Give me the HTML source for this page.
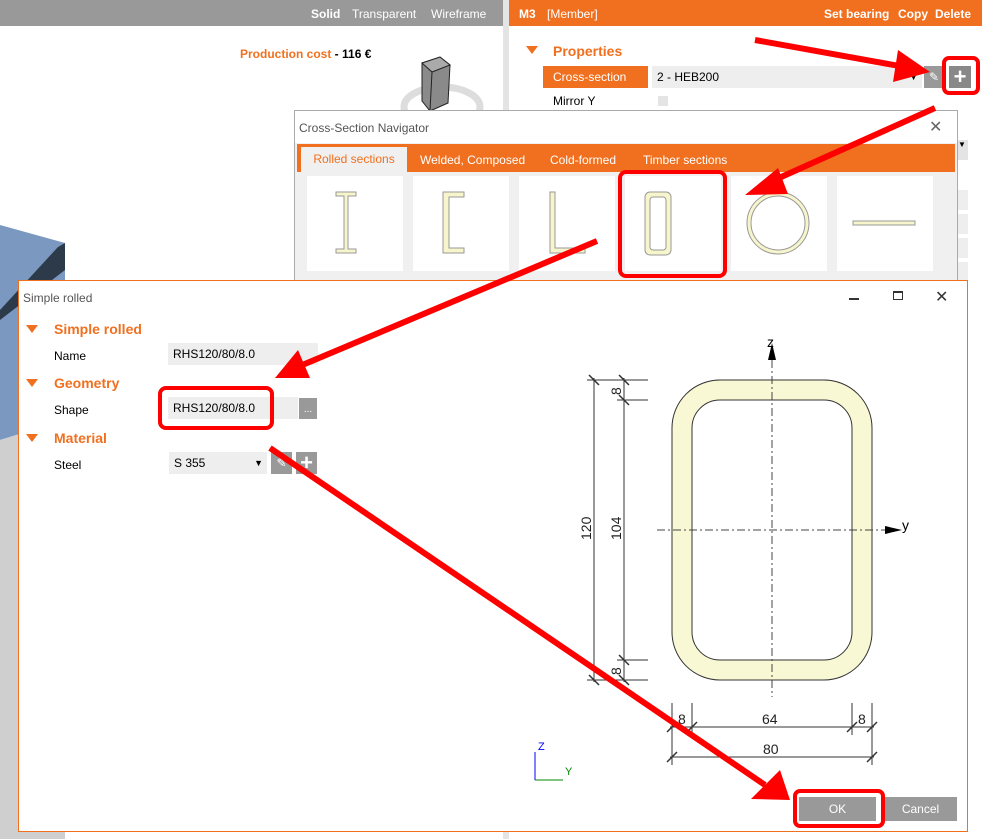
<!DOCTYPE html>
<html><head><meta charset="utf-8"><style>
*{margin:0;padding:0;box-sizing:border-box}
body{width:982px;height:839px;position:relative;overflow:hidden;background:#fff;font-family:"Liberation Sans",sans-serif;font-size:12px;color:#000}
.a{position:absolute}
.hd{color:#f07020;font-weight:bold;font-size:14px}
.tri{width:0;height:0;border-left:6px solid transparent;border-right:6px solid transparent;border-top:8px solid #f07020;position:absolute}
.fld{background:#eee;position:absolute;height:22px;line-height:22px;padding-left:5px;font-size:12px}
.tile{position:absolute;top:176px;width:96px;height:95px;background:#fff}
</style></head><body>
<div class="a" style="left:0;top:0;width:503px;height:26px;background:#999;color:#fff;font-size:12px">
<span class="a" style="left:311px;top:7px;font-weight:bold">Solid</span>
<span class="a" style="left:352px;top:7px">Transparent</span>
<span class="a" style="left:431px;top:7px">Wireframe</span></div>
<div class="a" style="left:503px;top:0;width:6px;height:839px;background:#e4e4e4"></div>
<div class="a" style="left:509px;top:0;width:473px;height:26px;background:#f07020;color:#fff">
<span class="a" style="left:10px;top:7px;font-weight:bold">M3</span>
<span class="a" style="left:38px;top:7px">[Member]</span>
<span class="a" style="left:315px;top:7px;font-weight:bold">Set bearing</span>
<span class="a" style="left:389px;top:7px;font-weight:bold">Copy</span>
<span class="a" style="left:426px;top:7px;font-weight:bold">Delete</span></div>
<div class="a" style="left:240px;top:47px;color:#f07020;font-weight:bold">Production cost <span style="color:#000">- 116 €</span></div>
<svg class="a" style="left:400px;top:55px" width="90" height="60"><ellipse cx="42" cy="52" rx="38" ry="20" fill="none" stroke="#ddd" stroke-width="7"/><polygon points="22,8 40,2 50,10 48,48 30,56 22,46" fill="#8a8a8a" stroke="#222"/><polygon points="22,8 40,2 50,10 32,17" fill="#aaa" stroke="#222"/><line x1="32" y1="17" x2="30" y2="56" stroke="#222"/></svg>
<svg class="a" style="left:0;top:225px" width="70" height="614"><polygon points="0,0 65,18 65,195 0,215" fill="#7a98c0"/><polygon points="0,215 65,195 65,614 0,614" fill="#cfcfcf"/><polygon points="58,22 65,18 65,45 0,95 0,85" fill="#2c3a4a"/></svg>
<div class="tri" style="left:526px;top:46px"></div>
<div class="a hd" style="left:553px;top:43px">Properties</div>
<div class="a" style="left:543px;top:66px;width:105px;height:22px;background:#f07020;color:#fff;line-height:22px;padding-left:10px">Cross-section</div>
<div class="fld" style="left:652px;top:66px;width:270px">2 - HEB200<span class="a" style="right:4px;top:0;font-size:9px">▼</span></div>
<div class="a" style="left:924px;top:66px;width:20px;height:22px;background:#999;color:#fff;text-align:center;line-height:22px">✎</div>
<div class="a" style="left:949px;top:66px;width:22px;height:22px;background:#888;color:#fff;font-size:22px;line-height:22px;text-align:center;font-weight:bold">+</div>
<div class="a" style="left:553px;top:94px">Mirror Y</div>
<div class="a" style="left:658px;top:96px;width:10px;height:10px;background:#e4e4e4"></div>
<div class="a" style="left:958px;top:140px;width:10px;height:20px;background:#e4e4e4;font-size:8px">▼</div>
<div class="a" style="left:958px;top:190px;width:10px;height:300px;background:repeating-linear-gradient(#eee 0 20px,#fff 20px 24px)"></div>
<div class="a" style="left:294px;top:110px;width:664px;height:180px;background:#f0f0f0;border:1px solid #aaa">
<div class="a" style="left:0;top:0;width:662px;height:32px;background:#fff"></div>
<span class="a" style="left:4px;top:10px;color:#555">Cross-Section Navigator</span>
<span class="a" style="left:634px;top:6px;font-size:16px;color:#666">✕</span>
<div class="a" style="left:2px;top:33px;width:658px;height:28px;background:#f07020"></div>
<div class="a" style="left:6px;top:36px;width:106px;height:25px;background:#f0f0f0;color:#f07020;line-height:25px;text-align:center">Rolled sections</div>
<span class="a" style="left:125px;top:42px;color:#fff">Welded, Composed</span>
<span class="a" style="left:255px;top:42px;color:#fff">Cold-formed</span>
<span class="a" style="left:348px;top:42px;color:#fff">Timber sections</span>
</div>
<div class="tile" style="left:307px"></div><div class="tile" style="left:413px"></div><div class="tile" style="left:519px"></div><div class="tile" style="left:625px"></div><div class="tile" style="left:731px"></div><div class="tile" style="left:837px"></div>
<svg class="a" style="left:0;top:0" width="982" height="280"><g fill="#f7f5cc" stroke="#999">
<path d="M336,192h20v4h-8v53h8v4h-20v-4h8v-53h-8z"/>
<path d="M443,192h21v5h-15v51h15v5h-21z"/>
<path d="M550,192h5v56h30v5h-35z"/>
<rect x="645" y="192" width="26" height="63" rx="5"/><rect x="650" y="197" width="16" height="53" rx="3" fill="#fff"/>
<circle cx="778" cy="223" r="31"/><circle cx="778" cy="223" r="27" fill="#fff"/>
<rect x="853" y="221" width="62" height="4"/></g></svg>
<div class="a" style="left:18px;top:280px;width:950px;height:552px;background:#fff;border:1px solid #f07020">
<span class="a" style="left:4px;top:10px;color:#555">Simple rolled</span>
<div class="a" style="left:830px;top:17px;width:10px;height:2px;background:#333"></div>
<div class="a" style="left:874px;top:10px;width:10px;height:9px;border:1px solid #333;border-top-width:2px"></div>
<span class="a" style="left:916px;top:6px;font-size:16px;color:#333">✕</span>
</div>
<div class="tri" style="left:26px;top:325px"></div><div class="a hd" style="left:54px;top:321px">Simple rolled</div>
<div class="a" style="left:54px;top:349px">Name</div><div class="fld" style="left:168px;top:343px;width:150px">RHS120/80/8.0</div>
<div class="tri" style="left:26px;top:379px"></div><div class="a hd" style="left:54px;top:375px">Geometry</div>
<div class="a" style="left:54px;top:403px">Shape</div><div class="fld" style="left:168px;top:397px;width:130px">RHS120/80/8.0</div>
<div class="a" style="left:299px;top:398px;width:18px;height:21px;background:#999;color:#fff;text-align:center;font-size:10px;line-height:24px">...</div>
<div class="tri" style="left:26px;top:434px"></div><div class="a hd" style="left:54px;top:430px">Material</div>
<div class="a" style="left:54px;top:458px">Steel</div><div class="fld" style="left:169px;top:452px;width:98px">S 355<span class="a" style="right:4px;top:0;font-size:9px">▼</span></div>
<div class="a" style="left:271px;top:452px;width:21px;height:22px;background:#999;color:#fff;text-align:center;line-height:22px">✎</div>
<div class="a" style="left:296px;top:452px;width:21px;height:22px;background:#999;color:#fff;font-size:22px;line-height:22px;text-align:center;font-weight:bold">+</div>
<div class="a" style="left:799px;top:797px;width:77px;height:24px;background:#999;color:#fff;text-align:center;line-height:24px">OK</div>
<div class="a" style="left:884px;top:797px;width:73px;height:24px;background:#999;color:#fff;text-align:center;line-height:24px">Cancel</div>
<svg class="a" style="left:0;top:0" width="982" height="839" font-family="Liberation Sans" font-size="14">
<rect x="672" y="380" width="200" height="300" rx="48" fill="#f8f8d4" stroke="#333"/>
<rect x="692" y="400" width="160" height="260" rx="28" fill="#fff" stroke="#333"/>
<g stroke="#444" stroke-dasharray="8,3,2,3"><line x1="772" y1="360" x2="772" y2="697"/><line x1="657" y1="530" x2="885" y2="530"/></g>
<polygon points="772,343 768,360 776,360" fill="#000"/><polygon points="902,530 885,526 885,534" fill="#000"/>
<text x="767" y="347">z</text><text x="902" y="530">y</text>
<g stroke="#333" fill="none">
<line x1="587" y1="380" x2="648" y2="380"/><line x1="617" y1="400" x2="648" y2="400"/><line x1="617" y1="660" x2="648" y2="660"/><line x1="587" y1="680" x2="648" y2="680"/>
<line x1="594" y1="378" x2="594" y2="682"/><line x1="624" y1="378" x2="624" y2="682"/>
<line x1="672" y1="703" x2="672" y2="765"/><line x1="692" y1="703" x2="692" y2="735"/><line x1="852" y1="703" x2="852" y2="735"/><line x1="872" y1="703" x2="872" y2="765"/>
<line x1="670" y1="727" x2="874" y2="727"/><line x1="670" y1="757" x2="874" y2="757"/>
<g stroke-width="1.5"><path d="M589,375l10,10M619,375l10,10M619,395l10,10M619,655l10,10M589,675l10,10M619,675l10,10M667,732l10,-10M687,732l10,-10M847,732l10,-10M867,732l10,-10M667,762l10,-10M867,762l10,-10"/></g></g>
<g fill="#222"><text x="591" y="540" transform="rotate(-90 591 540)">120</text><text x="621" y="540" transform="rotate(-90 621 540)">104</text>
<text x="621" y="395" transform="rotate(-90 621 395)">8</text><text x="621" y="675" transform="rotate(-90 621 675)">8</text>
<text x="678" y="724">8</text><text x="762" y="724">64</text><text x="858" y="724">8</text><text x="763" y="754">80</text></g>
<line x1="535" y1="780" x2="535" y2="752" stroke="#00f"/><text x="538" y="750" fill="#00f" font-size="11">Z</text>
<line x1="535" y1="780" x2="563" y2="780" stroke="#080"/><text x="565" y="775" fill="#080" font-size="11">Y</text>
<g stroke="#f00" stroke-width="6" fill="none">
<line x1="755" y1="40" x2="905" y2="67"/><line x1="935" y1="108" x2="770" y2="182"/><line x1="597" y1="241" x2="300" y2="366"/><line x1="270" y1="448" x2="765" y2="785"/></g>
<g fill="#f00"><polygon points="930,72 898,50 893,82"/><polygon points="745,195 778,168 788,194"/><polygon points="275,378 298,350 310,378"/><polygon points="790,800 751,799 780,770"/></g>
<g stroke="#f00" stroke-width="4" fill="none">
<rect x="944" y="58" width="34" height="35" rx="5"/><rect x="620" y="172" width="105" height="104" rx="6"/><rect x="160" y="388" width="112" height="40" rx="6"/><rect x="795" y="791" width="88" height="35" rx="5"/></g>
</svg>
</body></html>
